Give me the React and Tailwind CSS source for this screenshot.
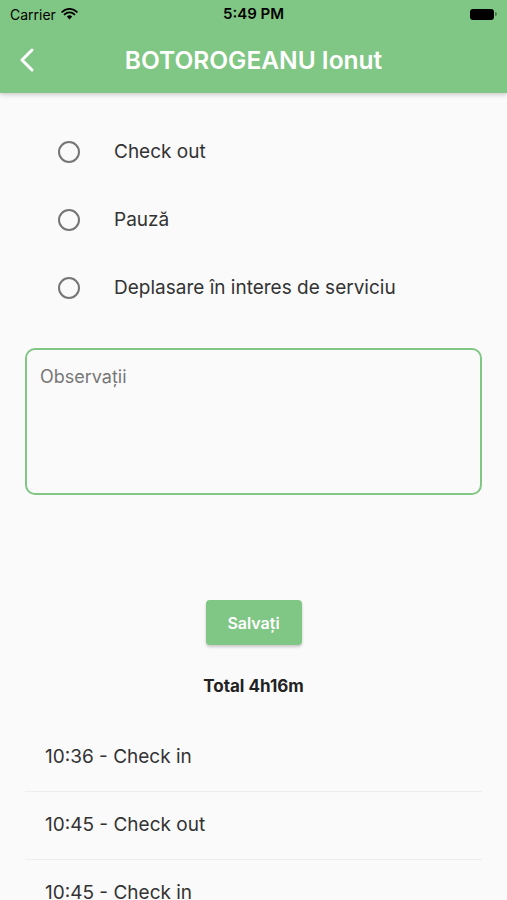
import React from 'react';

const font = { fontFamily: 'Inter, "Open Sans", sans-serif' };

const Radio = ({ label }) => (
  <div className="h-[68px] shrink-0 flex items-center">
    <div className="ml-[58px] w-[22px] h-[22px] rounded-full border-2 border-[#757575]" />
    <span className="ml-[34px] text-[19px] text-[#333]">{label}</span>
  </div>
);

const App = () => {
  const entries = ['10:36 - Check in', '10:45 - Check out', '10:45 - Check in'];

  return (
    <div className="w-[507px] h-[900px] bg-[#fafafa] overflow-hidden flex flex-col" style={font}>
      {/* header */}
      <div className="shrink-0 bg-[#80c684] shadow-[0_2px_4px_rgba(0,0,0,0.18)] relative z-10">
        <div className="h-[28px] flex items-center justify-between px-[10px] text-[14px] text-black">
          <div className="flex items-center gap-[5px] w-[120px]">
            <span>Carrier</span>
            <svg width="17" height="12" viewBox="0 0 17 12">
              <path d="M8.5 11.5 L5.8 8.6 A3.9 3.9 0 0 1 11.2 8.6 Z" fill="#000" />
              <path d="M3.6 6.4 A6.9 6.9 0 0 1 13.4 6.4" stroke="#000" strokeWidth="1.9" fill="none" strokeLinecap="round" />
              <path d="M1.2 3.9 A10.4 10.4 0 0 1 15.8 3.9" stroke="#000" strokeWidth="1.9" fill="none" strokeLinecap="round" />
            </svg>
          </div>
          <span className="font-semibold text-[15px]">5:49 PM</span>
          <div className="w-[120px] flex justify-end items-center">
            <div className="w-[24px] h-[11px] rounded-[3px] bg-black" />
            <div className="w-[2px] h-[4px] bg-black/40 rounded-r ml-[1px]" />
          </div>
        </div>
        <div className="h-[65px] flex items-center relative">
          <svg className="absolute left-[18px] top-[20px]" width="18" height="24" viewBox="0 0 18 24">
            <path d="M14 2 L4 12 L14 22" stroke="#fff" strokeWidth="3" fill="none" strokeLinecap="round" strokeLinejoin="round" />
          </svg>
          <div className="flex-1 text-center text-white text-[24.5px] font-semibold">BOTOROGEANU Ionut</div>
        </div>
      </div>

      {/* radios */}
      <div className="shrink-0 pt-[25px] flex flex-col">
        <Radio label="Check out" />
        <Radio label="Pauză" />
        <Radio label="Deplasare în interes de serviciu" />
      </div>

      {/* notes */}
      <div className="shrink-0 mx-[25px] mt-[26px] h-[147px] rounded-[10px] border-2 border-[#80c684] px-[13px] pt-[13px]">
        <span className="text-[18px] text-[#777]">Observații</span>
      </div>

      <div className="shrink-0 flex justify-center mt-[105px]">
        <button className="w-[96px] h-[45px] rounded-[4px] bg-[#80c684] text-white font-semibold text-[16px] shadow-[0_2px_3px_rgba(0,0,0,0.2)]">
          Salvați
        </button>
      </div>

      <div className="shrink-0 mt-[31px] text-center text-[17px] font-bold text-[#222] leading-[20px]">Total 4h16m</div>

      <div className="shrink-0 mt-[28px] mx-[25px] flex flex-col">
        {entries.map((e) => (
          <div key={e} className="h-[68px] shrink-0 flex items-center pl-[20px] border-b border-[#ededed] text-[19px] text-[#333]">
            {e}
          </div>
        ))}
      </div>
    </div>
  );
};

export default App;
